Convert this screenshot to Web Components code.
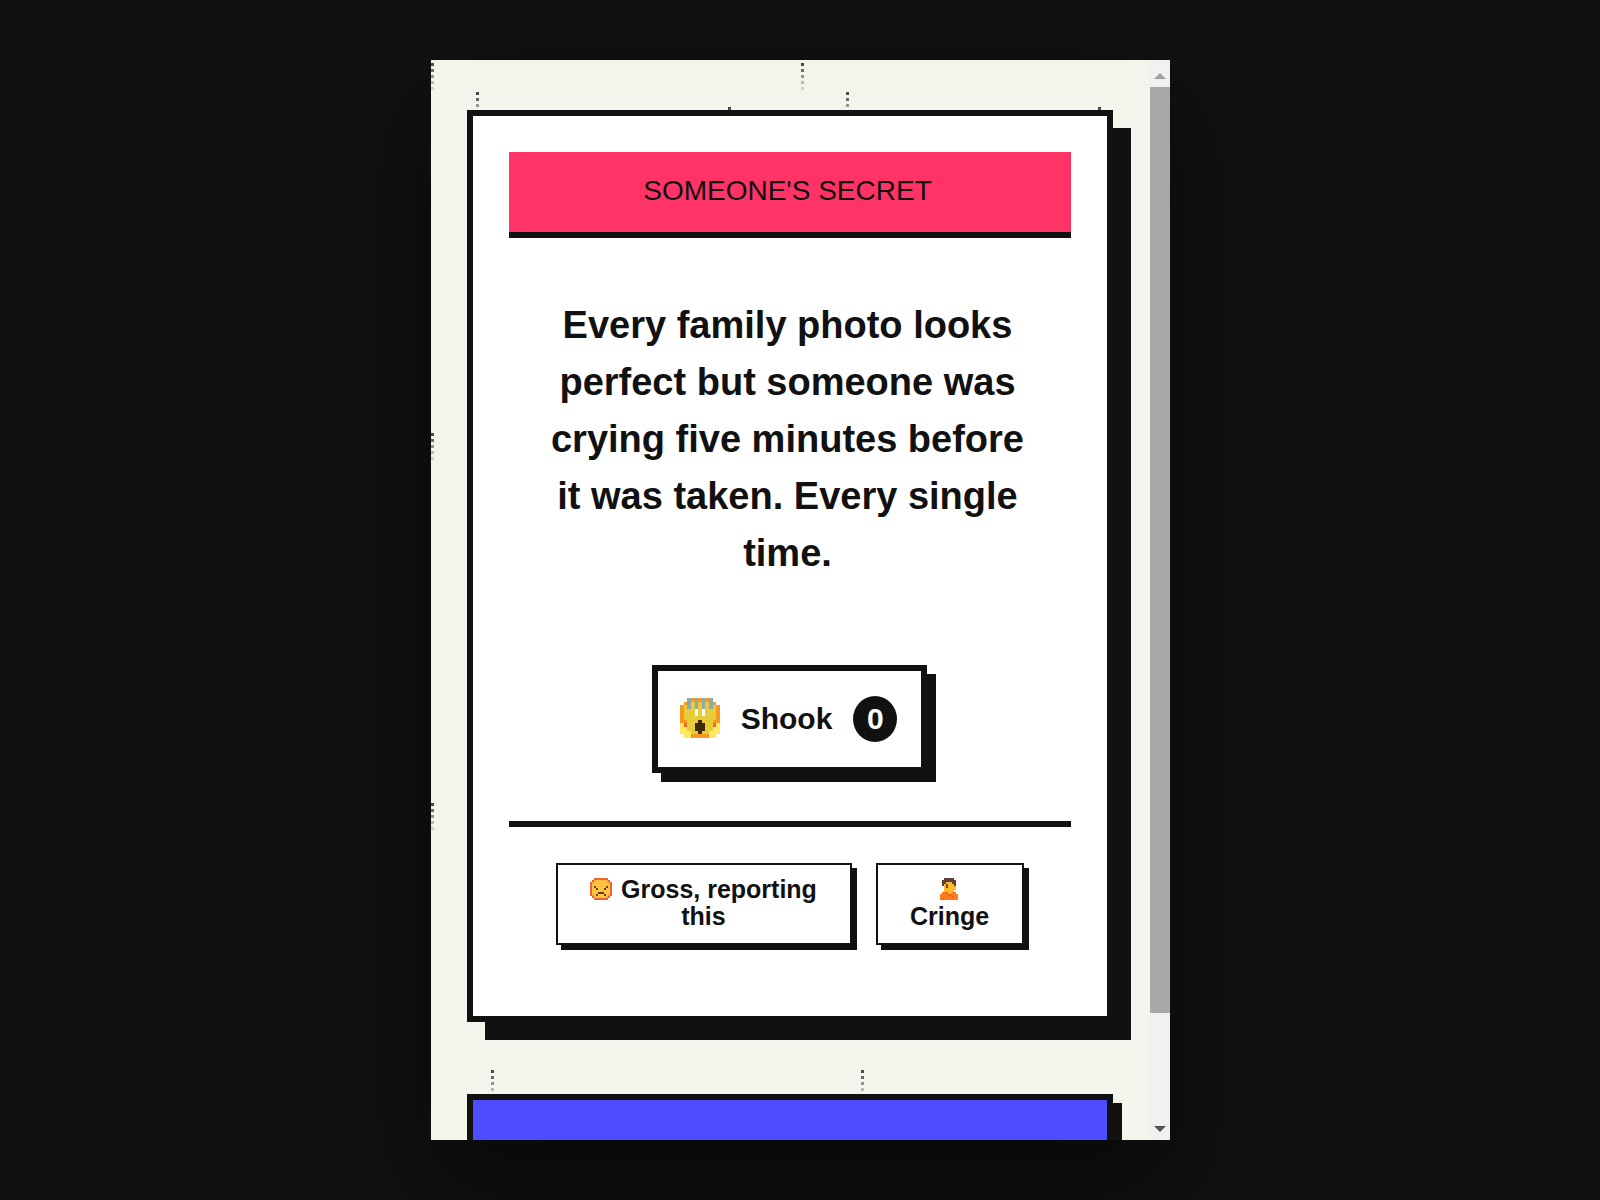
<!DOCTYPE html>
<html lang="en">
<head>
<meta charset="utf-8">
<meta name="viewport" content="width=device-width, initial-scale=1">
<title>Someone's Secret</title>
<style>
  body {
    margin: 0;
    background: #111;
    color: #111;
    font-family: "Liberation Sans", Arial, sans-serif;
  }
</style>
</head>
<body>
<secret-window>
  <secret-card heading="SOMEONE'S SECRET">
    Every family photo looks perfect but someone was crying five minutes before it was taken. Every single time.
    <shook-button slot="reaction" count="0">Shook</shook-button>
    <report-button slot="actions" icon="angry">Gross, reporting this</report-button>
    <report-button slot="actions" icon="facepalm">Cringe</report-button>
  </secret-card>
  <prompt-card></prompt-card>
</secret-window>

<script>
// Pixel icons: one character per pixel, "." is empty
const ICONS = {
  scream: {
    colors: { y: "#e6cc38", l: "#ffe960", o: "#f59a1c", r: "#ee6a2c", b: "#8fa8ae", w: "#fffdf0", k: "#3d2a08" },
    rows: [
      "..bobobob..",
      ".obybybybo.",
      "oybybybybyo",
      "oyyywywyyyo",
      "oyyywywyyyo",
      "oyyyyyyyyyo",
      "ooyyykyyyoo",
      "lryykkkyyrl",
      "llyykkkyyll",
      "lllyykyylll",
      ".lloooooll.",
    ],
  },
  angry: {
    colors: { y: "#ffc43d", r: "#ee6336", o: "#f8a33c", k: "#6b3d12" },
    rows: [
      "..rrrrrrr..",
      ".royyyyyor.",
      "royyyyyyyor",
      "ryyyyyyyyyr",
      "rykyyyyykyr",
      "ryykyyykyyr",
      "ryyyyyyyyyr",
      "ryyykkkyyyr",
      "roykyyykyor",
      ".royyyyyor.",
      "..rrrrrrr..",
    ],
  },
  facepalm: {
    colors: { h: "#5c4037", y: "#fdb92c", k: "#7a4b16", o: "#ff7a22", d: "#f0641c" },
    rows: [
      "..hhhhh..",
      ".hhhhhhh.",
      ".hhyyyhh.",
      ".hykyyyh.",
      "..ykyyyy.",
      "..yyyyyy.",
      "..yyyyy..",
      ".oodyyoo.",
      "ooooddooo",
      "oooooodoo",
      "odooooooo",
    ],
  },
};

function pixelIcon(name) {
  const { colors, rows } = ICONS[name];
  let rects = "";
  rows.forEach((row, y) => {
    [...row].forEach((c, x) => {
      if (c !== ".") {
        rects += `<rect x="${x}" y="${y}" width="1" height="1" fill="${colors[c]}"/>`;
      }
    });
  });
  return `<svg viewBox="0 0 ${rows[0].length} ${rows.length}" shape-rendering="crispEdges" aria-hidden="true">${rects}</svg>`;
}

function drip(x, y) {
  return [0.75, 0.6, 0.42, 0.26, 0.16]
    .map((o, i) => `<rect x="${x}" y="${y + i * 6}" width="3" height="3" fill="#111" opacity="${o}"/>`)
    .join("");
}

class SecretWindow extends HTMLElement {
  constructor() {
    super();
    this.attachShadow({ mode: "open" });
    this.shadowRoot.innerHTML = `
      <style>
        :host {
          display: flex;
          justify-content: center;
          align-items: center;
          height: 100vh;
          overflow: hidden;
        }
        .frame {
          display: flex;
          width: 100%;
          max-width: 739px;
          height: 90vh;
          overflow: hidden;
          background: #f4f3ec;
          box-shadow: 0 45px 90px rgba(0, 0, 0, 0.5);
        }
        .page {
          position: relative;
          flex: 1;
          min-width: 0;
          overflow: hidden;
        }
        .drips {
          position: absolute;
          inset: 0;
          width: 100%;
          height: 100%;
        }
        .feed {
          position: relative;
          display: flex;
          flex-direction: column;
          gap: 72px;
          padding: 50px 37px 0 36px;
        }
        .scrollbar {
          display: flex;
          flex-direction: column;
          width: 20px;
          background: #f1f1f1;
        }
        .arrow {
          display: flex;
          justify-content: center;
          align-items: flex-end;
          height: 27px;
          padding-bottom: 8px;
          box-sizing: border-box;
        }
        .arrow:last-child {
          margin-top: auto;
        }
        .thumb {
          flex: 0 0 926px;
          flex-basis: 85.7%;
          background: #a8a8a8;
        }
      </style>
      <div class="frame">
        <div class="page">
          <svg class="drips" aria-hidden="true" shape-rendering="crispEdges">
            <defs>
              <pattern id="drips" width="370" height="370" patternUnits="userSpaceOnUse">
                ${drip(0, 3)}${drip(45, 32)}${drip(297, 47)}${drip(60, 270)}
              </pattern>
            </defs>
            <rect width="100%" height="100%" fill="url(#drips)"/>
          </svg>
          <div class="feed"><slot></slot></div>
        </div>
        <div class="scrollbar" aria-hidden="true">
          <div class="arrow"><svg width="12" height="6"><path d="M0 6 6 0 12 6Z" fill="#a3a3a3"/></svg></div>
          <div class="thumb"></div>
          <div class="arrow"><svg width="12" height="6"><path d="M0 0H12L6 6Z" fill="#505050"/></svg></div>
        </div>
      </div>
    `;
  }
}
customElements.define("secret-window", SecretWindow);

class SecretCard extends HTMLElement {
  constructor() {
    super();
    this.attachShadow({ mode: "open" });
    this.shadowRoot.innerHTML = `
      <style>
        :host {
          display: block;
          padding: 36px 36px 71px;
          border: 6px solid #111;
          background: #fff;
          box-shadow: 18px 18px 0 #111;
        }
        h1 {
          margin: 0;
          padding: 19px 22px 21px 18px;
          border-bottom: 6px solid #111;
          background: #ff3366;
          font-size: 28px;
          font-weight: 400;
          line-height: 40px;
          text-align: center;
        }
        .message {
          margin: 0;
          padding: 59px 40px 83px 36px;
          font-size: 38px;
          font-weight: 700;
          line-height: 57px;
          text-align: center;
        }
        .reaction {
          display: flex;
          justify-content: center;
          padding-bottom: 48px;
        }
        .actions {
          display: flex;
          justify-content: center;
          gap: 24px;
          padding: 36px 47px 0;
          border-top: 6px solid #111;
        }
      </style>
      <h1></h1>
      <p class="message"><slot></slot></p>
      <div class="reaction"><slot name="reaction"></slot></div>
      <div class="actions"><slot name="actions"></slot></div>
    `;
    this.shadowRoot.querySelector("h1").textContent = this.getAttribute("heading");
  }
}
customElements.define("secret-card", SecretCard);

class ShookButton extends HTMLElement {
  constructor() {
    super();
    this.attachShadow({ mode: "open" });
    this.shadowRoot.innerHTML = `
      <style>
        :host {
          display: block;
        }
        button {
          display: flex;
          align-items: center;
          gap: 21px;
          height: 108px;
          padding: 0 24px 0 22px;
          border: 6px solid #111;
          background: #fff;
          box-shadow: 9px 9px 0 #111;
          color: #111;
          font: 700 30px/36px "Liberation Sans", Arial, sans-serif;
          cursor: pointer;
        }
        svg {
          width: 40px;
          height: 40px;
          padding-bottom: 2px;
        }
        .count {
          width: 44px;
          border-radius: 50%;
          background: #111;
          color: #fff;
          line-height: 46px;
        }
      </style>
      <button type="button">
        ${pixelIcon("scream")}
        <span><slot></slot></span>
        <span class="count"></span>
      </button>
    `;
    this.count = parseInt(this.getAttribute("count"), 10);
    this.countLabel = this.shadowRoot.querySelector(".count");
    this.countLabel.textContent = this.count;
    this.shadowRoot.querySelector("button").addEventListener("click", () => {
      this.count++;
      this.countLabel.textContent = this.count;
    });
  }
}
customElements.define("shook-button", ShookButton);

class ReportButton extends HTMLElement {
  constructor() {
    super();
    this.attachShadow({ mode: "open" });
    this.shadowRoot.innerHTML = `
      <style>
        :host {
          display: flex;
          flex: 2 1 0;
        }
        :host([icon="facepalm"]) {
          flex-grow: 1;
        }
        button {
          width: 100%;
          padding: 11px 32px 13px;
          border: 2px solid #111;
          background: #fff;
          box-shadow: 5px 5px 0 #111;
          color: #111;
          font: 700 25px/27px "Liberation Sans", Arial, sans-serif;
          cursor: pointer;
        }
        svg {
          width: 22px;
          height: 22px;
          margin-right: 2px;
          vertical-align: -2px;
        }
      </style>
      <button type="button">${pixelIcon(this.getAttribute("icon"))} <slot></slot></button>
    `;
  }
}
customElements.define("report-button", ReportButton);

class PromptCard extends HTMLElement {
  constructor() {
    super();
    this.attachShadow({ mode: "open" });
    this.shadowRoot.innerHTML = `
      <style>
        :host {
          display: block;
          min-height: 240px;
          border: 6px solid #111;
          background: #4d4dff;
          box-shadow: 9px 9px 0 #111;
        }
      </style>
      <slot></slot>
    `;
  }
}
customElements.define("prompt-card", PromptCard);
</script>
</body>
</html>
